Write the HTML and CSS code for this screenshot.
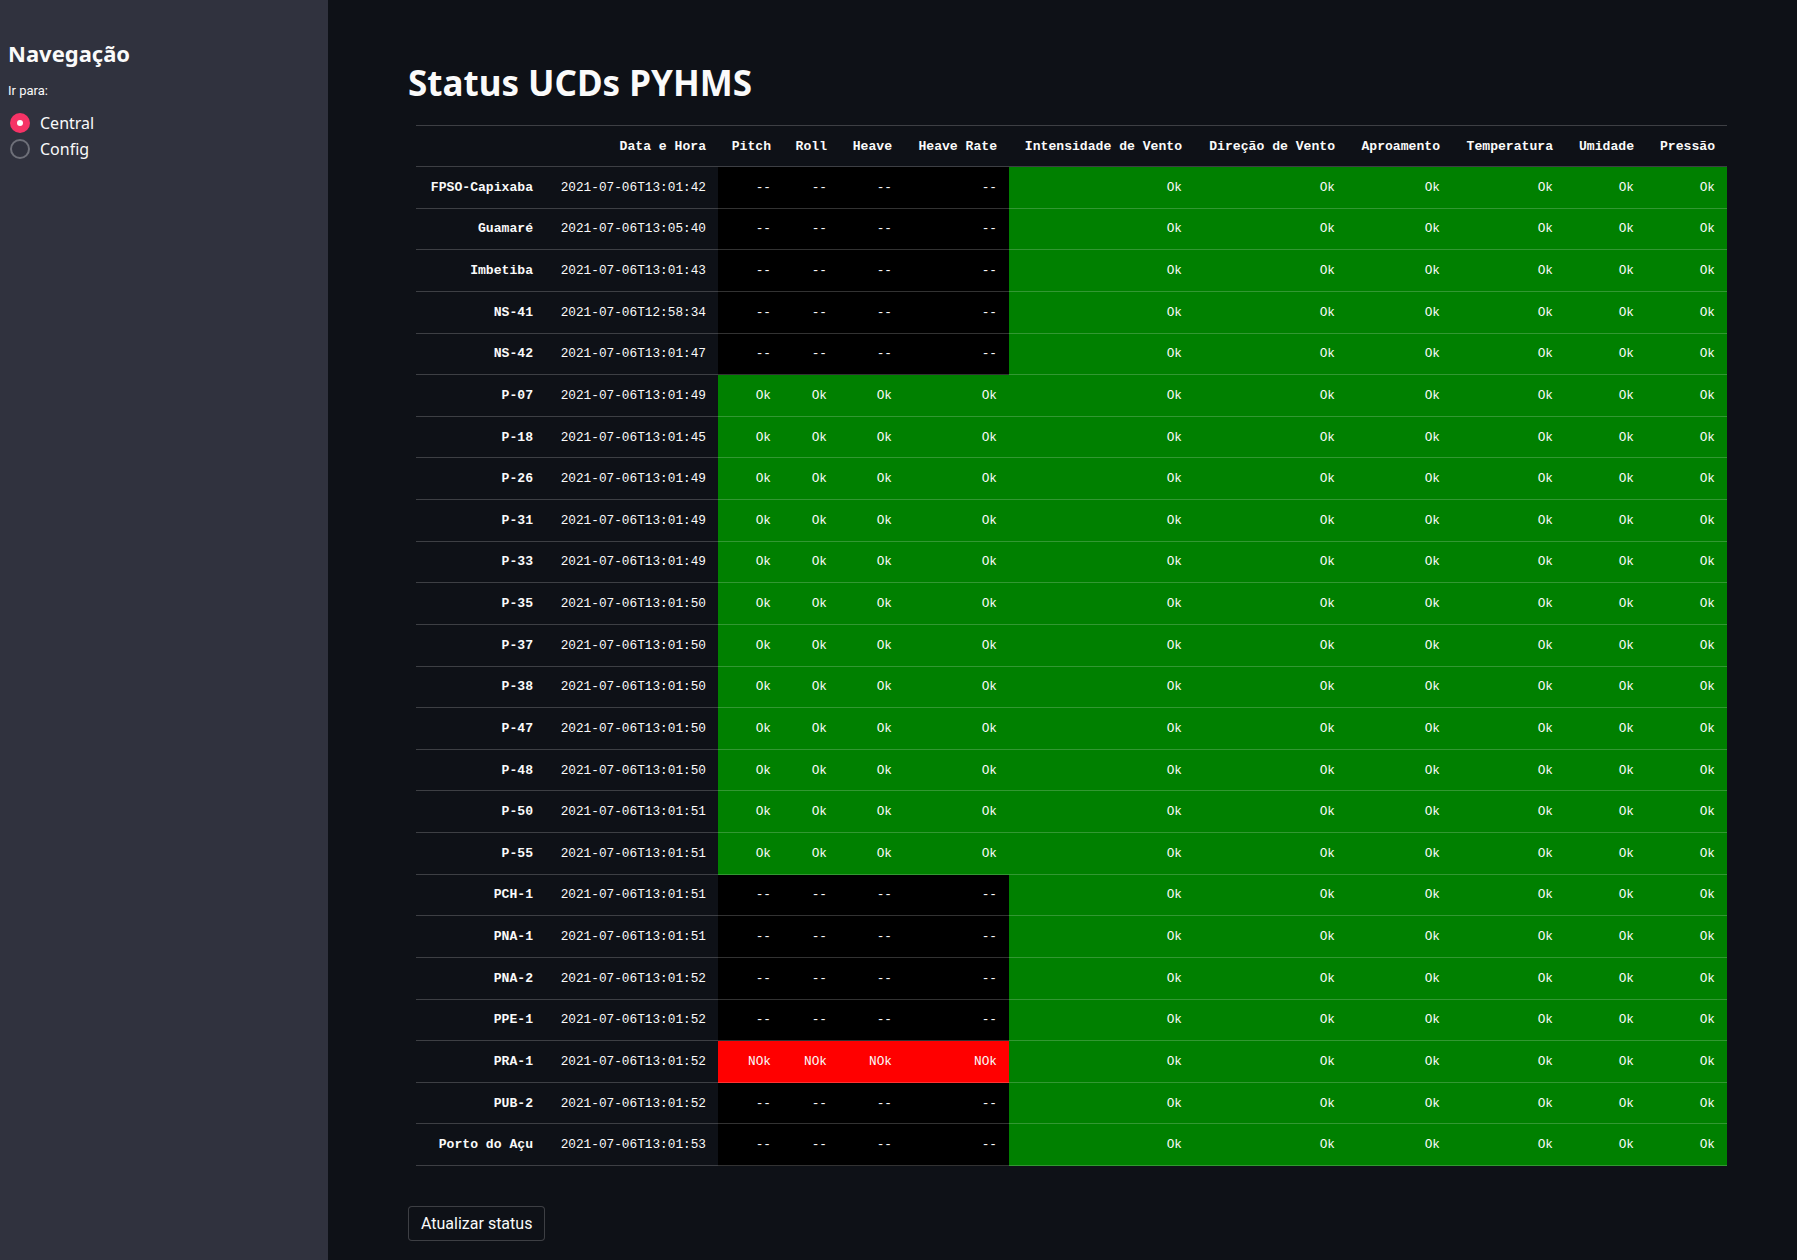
FILE: index.html
```html
<!DOCTYPE html>
<html lang="pt">
<head>
<meta charset="utf-8">
<title>Status UCDs PYHMS</title>
<link rel="stylesheet" href="styles.css">
</head>
<body>
<div class="app">
  <aside class="sidebar">
    <h2 class="side-title">Navegação</h2>
    <div class="side-label">Ir para:</div>
    <div class="radio-group">
      <label class="radio"><span class="radio-dot checked"></span><span class="radio-text">Central</span></label>
      <label class="radio"><span class="radio-dot"></span><span class="radio-text">Config</span></label>
    </div>
  </aside>
  <main class="main">
    <h1 class="title">Status UCDs PYHMS</h1>
    <table class="status">
      <colgroup>
        <col class="c-idx"><col class="c-date"><col class="c-pitch"><col class="c-roll"><col class="c-heave"><col class="c-hrate"><col class="c-int"><col class="c-dir"><col class="c-apr"><col class="c-temp"><col class="c-umi"><col class="c-pre">
      </colgroup>
      <thead>
        <tr><th></th><th>Data e Hora</th><th>Pitch</th><th>Roll</th><th>Heave</th><th>Heave Rate</th><th>Intensidade de Vento</th><th>Direção de Vento</th><th>Aproamento</th><th>Temperatura</th><th>Umidade</th><th>Pressão</th></tr>
      </thead>
      <tbody>
        <tr><th>FPSO-Capixaba</th><td>2021-07-06T13:01:42</td><td class="k">--</td><td class="k">--</td><td class="k">--</td><td class="k">--</td><td class="g">Ok</td><td class="g">Ok</td><td class="g">Ok</td><td class="g">Ok</td><td class="g">Ok</td><td class="g">Ok</td></tr>
        <tr><th>Guamaré</th><td>2021-07-06T13:05:40</td><td class="k">--</td><td class="k">--</td><td class="k">--</td><td class="k">--</td><td class="g">Ok</td><td class="g">Ok</td><td class="g">Ok</td><td class="g">Ok</td><td class="g">Ok</td><td class="g">Ok</td></tr>
        <tr><th>Imbetiba</th><td>2021-07-06T13:01:43</td><td class="k">--</td><td class="k">--</td><td class="k">--</td><td class="k">--</td><td class="g">Ok</td><td class="g">Ok</td><td class="g">Ok</td><td class="g">Ok</td><td class="g">Ok</td><td class="g">Ok</td></tr>
        <tr><th>NS-41</th><td>2021-07-06T12:58:34</td><td class="k">--</td><td class="k">--</td><td class="k">--</td><td class="k">--</td><td class="g">Ok</td><td class="g">Ok</td><td class="g">Ok</td><td class="g">Ok</td><td class="g">Ok</td><td class="g">Ok</td></tr>
        <tr><th>NS-42</th><td>2021-07-06T13:01:47</td><td class="k">--</td><td class="k">--</td><td class="k">--</td><td class="k">--</td><td class="g">Ok</td><td class="g">Ok</td><td class="g">Ok</td><td class="g">Ok</td><td class="g">Ok</td><td class="g">Ok</td></tr>
        <tr><th>P-07</th><td>2021-07-06T13:01:49</td><td class="g">Ok</td><td class="g">Ok</td><td class="g">Ok</td><td class="g">Ok</td><td class="g">Ok</td><td class="g">Ok</td><td class="g">Ok</td><td class="g">Ok</td><td class="g">Ok</td><td class="g">Ok</td></tr>
        <tr><th>P-18</th><td>2021-07-06T13:01:45</td><td class="g">Ok</td><td class="g">Ok</td><td class="g">Ok</td><td class="g">Ok</td><td class="g">Ok</td><td class="g">Ok</td><td class="g">Ok</td><td class="g">Ok</td><td class="g">Ok</td><td class="g">Ok</td></tr>
        <tr><th>P-26</th><td>2021-07-06T13:01:49</td><td class="g">Ok</td><td class="g">Ok</td><td class="g">Ok</td><td class="g">Ok</td><td class="g">Ok</td><td class="g">Ok</td><td class="g">Ok</td><td class="g">Ok</td><td class="g">Ok</td><td class="g">Ok</td></tr>
        <tr><th>P-31</th><td>2021-07-06T13:01:49</td><td class="g">Ok</td><td class="g">Ok</td><td class="g">Ok</td><td class="g">Ok</td><td class="g">Ok</td><td class="g">Ok</td><td class="g">Ok</td><td class="g">Ok</td><td class="g">Ok</td><td class="g">Ok</td></tr>
        <tr><th>P-33</th><td>2021-07-06T13:01:49</td><td class="g">Ok</td><td class="g">Ok</td><td class="g">Ok</td><td class="g">Ok</td><td class="g">Ok</td><td class="g">Ok</td><td class="g">Ok</td><td class="g">Ok</td><td class="g">Ok</td><td class="g">Ok</td></tr>
        <tr><th>P-35</th><td>2021-07-06T13:01:50</td><td class="g">Ok</td><td class="g">Ok</td><td class="g">Ok</td><td class="g">Ok</td><td class="g">Ok</td><td class="g">Ok</td><td class="g">Ok</td><td class="g">Ok</td><td class="g">Ok</td><td class="g">Ok</td></tr>
        <tr><th>P-37</th><td>2021-07-06T13:01:50</td><td class="g">Ok</td><td class="g">Ok</td><td class="g">Ok</td><td class="g">Ok</td><td class="g">Ok</td><td class="g">Ok</td><td class="g">Ok</td><td class="g">Ok</td><td class="g">Ok</td><td class="g">Ok</td></tr>
        <tr><th>P-38</th><td>2021-07-06T13:01:50</td><td class="g">Ok</td><td class="g">Ok</td><td class="g">Ok</td><td class="g">Ok</td><td class="g">Ok</td><td class="g">Ok</td><td class="g">Ok</td><td class="g">Ok</td><td class="g">Ok</td><td class="g">Ok</td></tr>
        <tr><th>P-47</th><td>2021-07-06T13:01:50</td><td class="g">Ok</td><td class="g">Ok</td><td class="g">Ok</td><td class="g">Ok</td><td class="g">Ok</td><td class="g">Ok</td><td class="g">Ok</td><td class="g">Ok</td><td class="g">Ok</td><td class="g">Ok</td></tr>
        <tr><th>P-48</th><td>2021-07-06T13:01:50</td><td class="g">Ok</td><td class="g">Ok</td><td class="g">Ok</td><td class="g">Ok</td><td class="g">Ok</td><td class="g">Ok</td><td class="g">Ok</td><td class="g">Ok</td><td class="g">Ok</td><td class="g">Ok</td></tr>
        <tr><th>P-50</th><td>2021-07-06T13:01:51</td><td class="g">Ok</td><td class="g">Ok</td><td class="g">Ok</td><td class="g">Ok</td><td class="g">Ok</td><td class="g">Ok</td><td class="g">Ok</td><td class="g">Ok</td><td class="g">Ok</td><td class="g">Ok</td></tr>
        <tr><th>P-55</th><td>2021-07-06T13:01:51</td><td class="g">Ok</td><td class="g">Ok</td><td class="g">Ok</td><td class="g">Ok</td><td class="g">Ok</td><td class="g">Ok</td><td class="g">Ok</td><td class="g">Ok</td><td class="g">Ok</td><td class="g">Ok</td></tr>
        <tr><th>PCH-1</th><td>2021-07-06T13:01:51</td><td class="k">--</td><td class="k">--</td><td class="k">--</td><td class="k">--</td><td class="g">Ok</td><td class="g">Ok</td><td class="g">Ok</td><td class="g">Ok</td><td class="g">Ok</td><td class="g">Ok</td></tr>
        <tr><th>PNA-1</th><td>2021-07-06T13:01:51</td><td class="k">--</td><td class="k">--</td><td class="k">--</td><td class="k">--</td><td class="g">Ok</td><td class="g">Ok</td><td class="g">Ok</td><td class="g">Ok</td><td class="g">Ok</td><td class="g">Ok</td></tr>
        <tr><th>PNA-2</th><td>2021-07-06T13:01:52</td><td class="k">--</td><td class="k">--</td><td class="k">--</td><td class="k">--</td><td class="g">Ok</td><td class="g">Ok</td><td class="g">Ok</td><td class="g">Ok</td><td class="g">Ok</td><td class="g">Ok</td></tr>
        <tr><th>PPE-1</th><td>2021-07-06T13:01:52</td><td class="k">--</td><td class="k">--</td><td class="k">--</td><td class="k">--</td><td class="g">Ok</td><td class="g">Ok</td><td class="g">Ok</td><td class="g">Ok</td><td class="g">Ok</td><td class="g">Ok</td></tr>
        <tr><th>PRA-1</th><td>2021-07-06T13:01:52</td><td class="r">NOk</td><td class="r">NOk</td><td class="r">NOk</td><td class="r">NOk</td><td class="g">Ok</td><td class="g">Ok</td><td class="g">Ok</td><td class="g">Ok</td><td class="g">Ok</td><td class="g">Ok</td></tr>
        <tr><th>PUB-2</th><td>2021-07-06T13:01:52</td><td class="k">--</td><td class="k">--</td><td class="k">--</td><td class="k">--</td><td class="g">Ok</td><td class="g">Ok</td><td class="g">Ok</td><td class="g">Ok</td><td class="g">Ok</td><td class="g">Ok</td></tr>
        <tr><th>Porto do Açu</th><td>2021-07-06T13:01:53</td><td class="k">--</td><td class="k">--</td><td class="k">--</td><td class="k">--</td><td class="g">Ok</td><td class="g">Ok</td><td class="g">Ok</td><td class="g">Ok</td><td class="g">Ok</td><td class="g">Ok</td></tr>
      </tbody>
    </table>
    <button class="btn" type="button">Atualizar status</button>
  </main>
</div>
</body>
</html>
```

FILE: styles.css
```css
html, body {
  margin: 0;
  padding: 0;
  background: #0e1117;
  color: #fafafa;
  font-family: "Noto Sans", sans-serif;
}

.app {
  display: flex;
  min-height: 1260px;
}

.sidebar {
  width: 328px;
  flex: 0 0 328px;
  background: #30323e;
  padding: 37px 8px 0 8px;
  box-sizing: border-box;
}

.side-title {
  margin: 0;
  font-size: 22px;
  line-height: 33px;
  font-weight: 700;
  color: #fafafa;
}

.side-label {
  margin-top: 12px;
  font-family: Roboto, sans-serif;
  font-size: 13px;
  line-height: 18px;
  color: #fafafa;
}

.radio-group {
  margin-top: 10px;
  display: flex;
  flex-direction: column;
}

.radio {
  display: flex;
  align-items: center;
  height: 26px;
  gap: 10px;
  padding-left: 2px;
}

.radio-dot {
  width: 20px;
  height: 20px;
  border-radius: 50%;
  box-sizing: border-box;
  border: 2px solid #6e7079;
  display: flex;
  align-items: center;
  justify-content: center;
}

.radio-dot.checked {
  border: none;
  background: #f63366;
}

.radio-dot.checked::after {
  content: "";
  width: 6px;
  height: 6px;
  border-radius: 50%;
  background: #ffffff;
}

.radio-text {
  font-size: 16px;
  line-height: 20px;
  color: #fafafa;
}

.main {
  flex: 1;
  padding: 57px 80px 0 80px;
  min-width: 0;
}

.title {
  margin: 0 0 16px 0;
  font-size: 35px;
  line-height: 52px;
  font-weight: 700;
  color: #fafafa;
}

.status {
  margin-left: 8px;
  width: 1311px;
  table-layout: fixed;
  border-collapse: separate;
  border-spacing: 0;
  font-family: "Liberation Mono", monospace;
  font-size: 12.75px;
}

.c-idx { width: 129px; }
.c-date { width: 173px; }
.c-pitch { width: 65px; }
.c-roll { width: 56px; }
.c-heave { width: 65px; }
.c-hrate { width: 105px; }
.c-int { width: 185px; }
.c-dir { width: 153px; }
.c-apr { width: 105px; }
.c-temp { width: 113px; }
.c-umi { width: 81px; }
.c-pre { width: 81px; }

.status th,
.status td {
  box-sizing: border-box;
  height: 41.625px;
  padding: 0 12px 0 4px;
  text-align: right;
  vertical-align: middle;
  white-space: nowrap;
  border-bottom: 1px solid rgba(250, 250, 250, 0.2);
  color: #fafafa;
}

.status th {
  font-size: 13.1px;
  font-weight: 700;
}

.status thead th {
  height: 42px;
  border-top: 1px solid rgba(250, 250, 250, 0.2);
}

.status td.k { background: #000000; }
.status td.g { background: #008000; }
.status td.r { background: #ff0000; }

.btn {
  display: block;
  margin-top: 40px;
  font-family: Roboto, sans-serif;
  font-size: 16px;
  line-height: 25px;
  color: #fafafa;
  background: #0e1117;
  border: 1px solid rgba(250, 250, 250, 0.2);
  border-radius: 4px;
  padding: 4px 12px;
  height: 35px;
  box-sizing: border-box;
}
```
